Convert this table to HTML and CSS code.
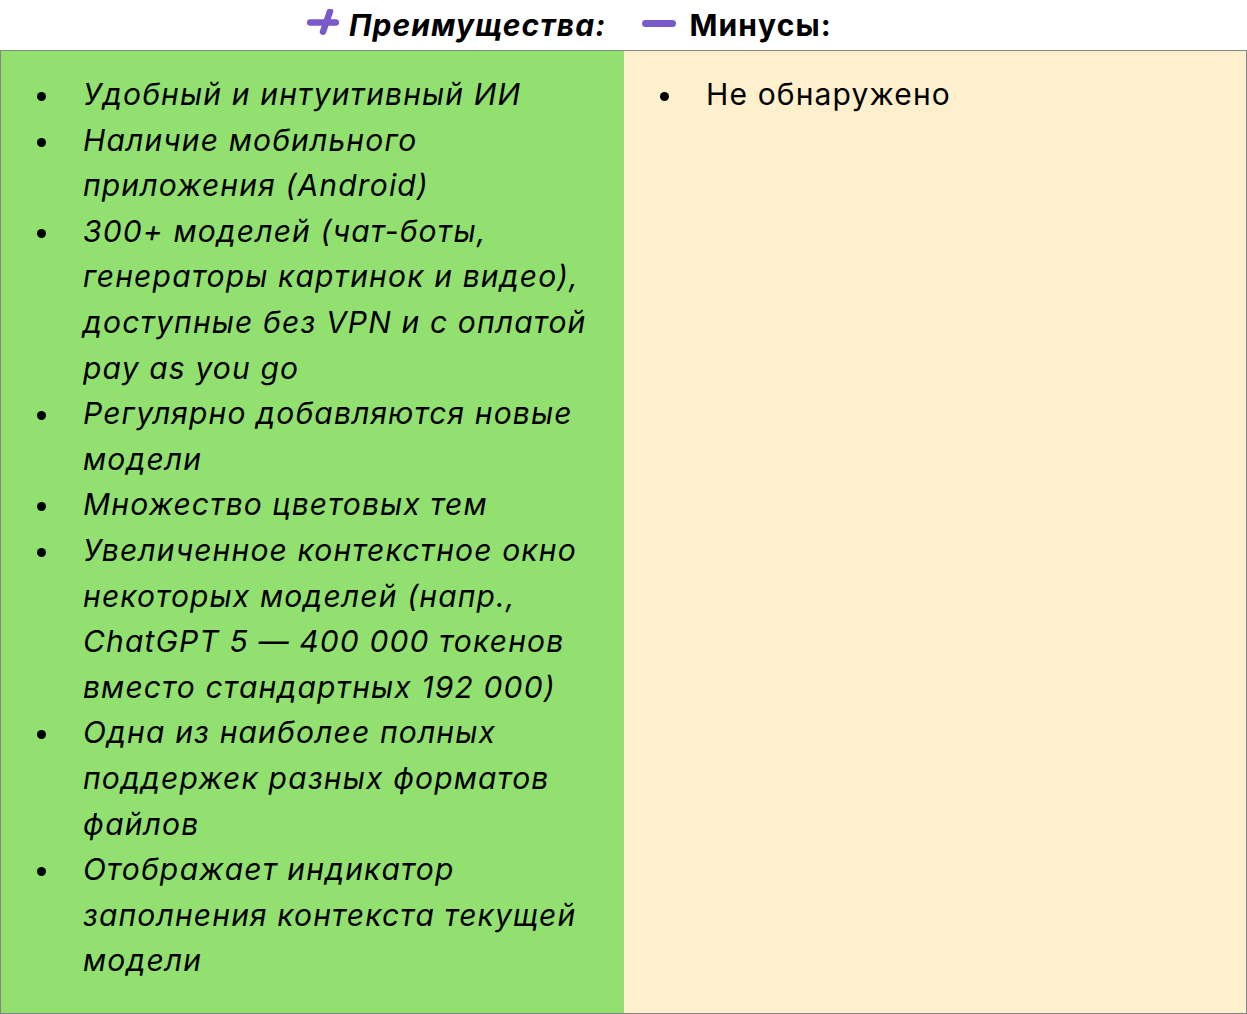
FILE: index.html
```html
<!DOCTYPE html>
<html lang="ru">
<head>
<meta charset="utf-8">
<link rel="stylesheet" href="styles.css">
</head>
<body>
<div class="head">
  <div class="head-item pros">
    <svg class="icon" width="34" height="32" viewBox="0 0 34 32"><path d="M5.25 13.5 H30.75 M25 2.5 L18 22.75" stroke="#7a5acb" stroke-width="6.5" stroke-linecap="round" fill="none"/></svg>
    <span>Преимущества:</span>
  </div>
  <div class="head-item cons">
    <svg class="icon" width="34" height="32" viewBox="0 0 34 32"><path d="M3.5 14.5 H30.5" stroke="#7a5acb" stroke-width="7" stroke-linecap="round" fill="none"/></svg>
    <span>Минусы:</span>
  </div>
</div>
<div class="table">
  <div class="col col-pros">
    <ul class="list italic">
      <li>Удобный и интуитивный ИИ</li>
      <li>Наличие мобильного приложения (Android)</li>
      <li>300+ моделей (чат-боты, генераторы картинок и видео), доступные без VPN и с оплатой pay as you go</li>
      <li>Регулярно добавляются новые модели</li>
      <li>Множество цветовых тем</li>
      <li>Увеличенное контекстное окно некоторых моделей (напр., ChatGPT 5 — 400 000 токенов вместо стандартных 192 000)</li>
      <li>Одна из наиболее полных поддержек разных форматов файлов</li>
      <li>Отображает индикатор заполнения контекста текущей модели</li>
    </ul>
  </div>
  <div class="col col-cons">
    <ul class="list">
      <li>Не обнаружено</li>
    </ul>
  </div>
</div>
</body>
</html>
```
FILE: styles.css
```css
html, body {
  margin: 0;
  padding: 0;
  background: #fff;
}
body {
  font-family: Inter, "Noto Sans", sans-serif;
  color: #000;
  width: 1247px;
  height: 1014px;
  overflow: hidden;
}
.head {
  height: 50px;
  display: flex;
  align-items: center;
  padding-left: 305px;
  gap: 36px;
  box-sizing: border-box;
}
.head-item {
  display: flex;
  align-items: center;
  gap: 10px;
  font-size: 30px;
  font-weight: 700;
  letter-spacing: 1.1px;
}
.head-item.cons {
  gap: 13px;
}
.head-item.pros span {
  font-style: italic;
}
.icon {
  display: block;
  flex: none;
}
.table {
  display: grid;
  grid-template-columns: 623px 1fr;
  border: 1px solid #858585;
  height: 964px;
  box-sizing: border-box;
}
.col-pros {
  background: #92e070;
}
.col-cons {
  background: #fff0cd;
}
.list {
  margin: 0;
  padding: 21px 20px 0 82px;
  list-style: none;
  font-size: 30px;
  line-height: 45.6px;
  letter-spacing: 1.15px;
}
.italic {
  font-style: italic;
}
.list li::before {
  content: "";
  display: inline-block;
  width: 9px;
  height: 9px;
  border-radius: 50%;
  background: #000;
  margin-left: -46px;
  margin-right: 37px;
  vertical-align: 4px;
}
```
